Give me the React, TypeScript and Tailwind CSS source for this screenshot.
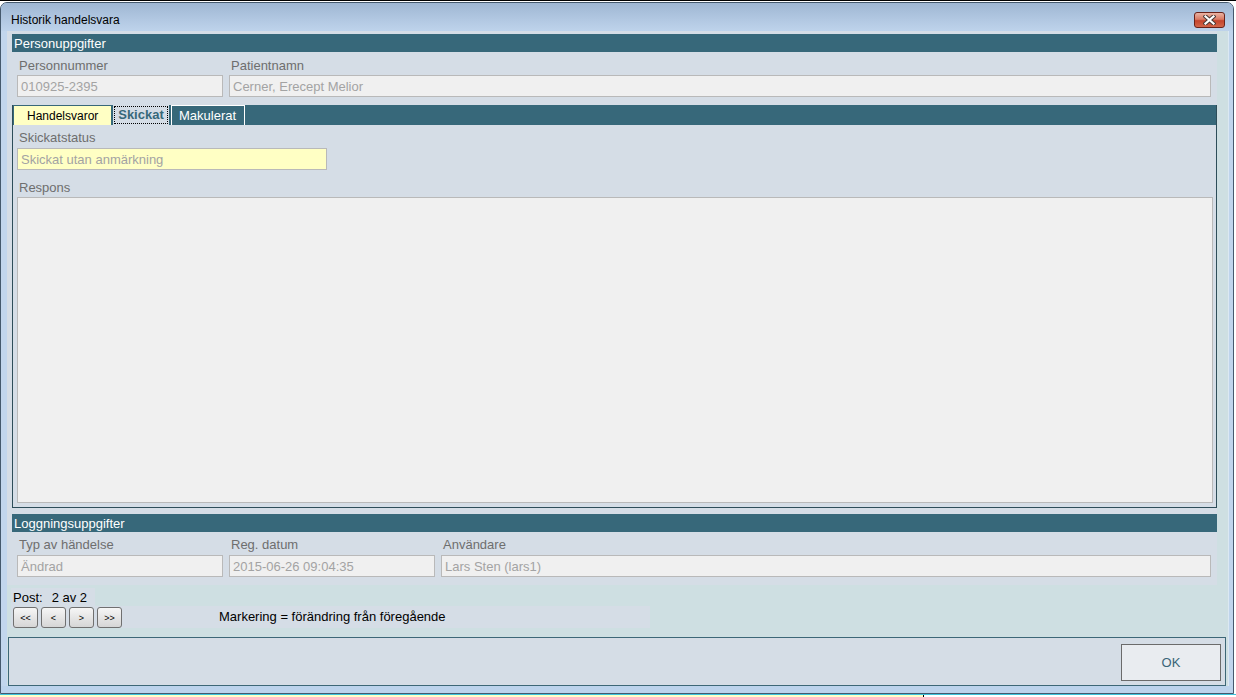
import React from "react";

const font = "font-['Liberation_Sans',Arial,sans-serif]";

const Label: React.FC<{ text: string }> = ({ text }) => (
  <div className="h-[16px] pl-[2px] text-[13px] leading-[16px] text-[#6e6e6e] whitespace-nowrap">
    {text}
  </div>
);

const Field: React.FC<{ value: string; className?: string; yellow?: boolean }> = ({
  value,
  className = "",
  yellow,
}) => (
  <div
    className={`h-[22px] border border-[#b9b9b9] pl-[3px] text-[13px] leading-[21px] text-[#a3a3a3] whitespace-nowrap overflow-hidden ${
      yellow ? "bg-[#ffffc4]" : "bg-[#f0f0f0]"
    } ${className}`}
  >
    {value}
  </div>
);

const SectionHeader: React.FC<{ title: string }> = ({ title }) => (
  <div className="h-[18px] bg-[#37687a] pl-[2px] text-[13px] leading-[19px] text-white">
    {title}
  </div>
);

const NavButton: React.FC<{ label: string }> = ({ label }) => (
  <button
    type="button"
    className="w-[25px] h-[21px] rounded-[3px] border border-[#707070] bg-[linear-gradient(180deg,#f6f6f6_0%,#e4e4e4_55%,#d6d6d6_100%)] text-[9px] leading-[18px] text-black flex items-center justify-center"
  >
    {label}
  </button>
);

const App: React.FC = () => {
  return (
    <div className={`w-[1236px] h-[697px] overflow-hidden bg-white ${font}`}>
      {/* strip of whatever lies behind the window */}
      <div className="h-[2px] border-t border-black bg-white" />

      {/* window */}
      <div className="w-[1234px] h-[692px] rounded-t-[7px] border border-[#45596d] bg-[#bfd4ec] flex flex-col overflow-hidden">
        {/* title bar */}
        <div className="h-[28px] shrink-0 flex items-start justify-between bg-[linear-gradient(180deg,#9fb7d3_0%,#b2c8e2_60%,#bed3eb_100%)]">
          <div className="pl-[10px] pt-[10px] text-[12px] leading-[14px] text-black">
            Historik handelsvara
          </div>
          <div className="mt-[9px] mr-[8px] w-[31px] h-[16px] rounded-[3px] border border-[#6a2219] bg-[linear-gradient(180deg,#eab3a3_0%,#d97a64_45%,#c4442c_55%,#d2664a_100%)] flex items-center justify-center">
            <svg width="13" height="10" viewBox="0 0 13 10">
              <path d="M2.5 1.5 L10.5 8.5 M10.5 1.5 L2.5 8.5" stroke="#4a3a36" strokeWidth="4.2" strokeLinecap="square" />
              <path d="M2.5 1.5 L10.5 8.5 M10.5 1.5 L2.5 8.5" stroke="#ffffff" strokeWidth="2.2" strokeLinecap="square" />
            </svg>
          </div>
        </div>

        {/* body row: left frame, client, right frame */}
        <div className="flex h-[655px] shrink-0">
          <div className="w-[6px] bg-[#c2d6ed]" />

          {/* client */}
          <div className="w-[1221px] bg-[#cedfe2] flex flex-col">
            {/* form panel */}
            <div className="w-[1210px] h-[554px] bg-[#d5dde6] pl-[5px] pt-[3px] flex flex-col">
              <SectionHeader title="Personuppgifter" />
              <div className="mt-[6px] ml-[5px] flex gap-[6px]">
                <div className="w-[206px]">
                  <Label text="Personnummer" />
                  <Field value="010925-2395" className="mt-[1px]" />
                </div>
                <div className="w-[982px]">
                  <Label text="Patientnamn" />
                  <Field value="Cerner, Erecept Melior" className="mt-[1px]" />
                </div>
              </div>

              {/* tab panel */}
              <div className="mt-[8px] w-[1205px] h-[403px] border-x border-b border-[#2d4d59] flex flex-col">
                <div className="h-[20px] bg-[#37687a] flex items-end pl-[1px] gap-[2px]">
                  <div className="h-[19px] w-[97px] bg-[#ffffc4] pl-[13px] text-[12px] leading-[20px] text-black">
                    Handelsvaror
                  </div>
                  <div className="h-[20px] w-[56px] bg-[#d5dde6] p-[1px]">
                    <div className="h-full border border-dotted border-black flex items-center justify-center text-[13px] font-bold text-[#37687a] leading-[16px]">
                      Skickat
                    </div>
                  </div>
                  <div className="h-[20px] w-[74px] border-x border-t border-white bg-[#37687a] pl-[7px] text-[13px] leading-[19px] text-white">
                    Makulerat
                  </div>
                </div>
                <div className="flex-1 pl-[4px] pr-[3px] pt-[5px] pb-[4px] flex flex-col">
                  <Label text="Skickatstatus" />
                  <Field value="Skickat utan anmärkning" yellow className="mt-[2px] w-[310px]" />
                  <div className="mt-[10px]">
                    <Label text="Respons" />
                  </div>
                  <div className="mt-[1px] flex-1 border border-[#b9b9b9] bg-[#f0f0f0]" />
                </div>
              </div>

              <div className="mt-[6px]">
                <SectionHeader title="Loggningsuppgifter" />
              </div>
              <div className="mt-[5px] ml-[5px] flex gap-[6px]">
                <div className="w-[206px]">
                  <Label text="Typ av händelse" />
                  <Field value="Ändrad" className="mt-[2px]" />
                </div>
                <div className="w-[206px]">
                  <Label text="Reg. datum" />
                  <Field value="2015-06-26 09:04:35" className="mt-[2px]" />
                </div>
                <div className="w-[770px]">
                  <Label text="Användare" />
                  <Field value="Lars Sten (lars1)" className="mt-[2px]" />
                </div>
              </div>
            </div>

            {/* record navigation */}
            <div className="h-[52px] pt-[3px] flex flex-col">
              <div className="ml-[4px] w-[84px] h-[18px] bg-[#d5dde6] pl-[2px] flex gap-[9px] text-[13px] leading-[19px] text-black">
                <span>Post:</span>
                <span>2 av 2</span>
              </div>
              <div className="ml-[4px] w-[639px] h-[22px] bg-[#d5dde6] pl-[2px] pt-[1px] flex items-start">
                <div className="flex gap-[3px]">
                  <NavButton label="<<" />
                  <NavButton label="<" />
                  <NavButton label=">" />
                  <NavButton label=">>" />
                </div>
                <div className="ml-[97px] -mt-[1px] text-[13px] leading-[22px] text-black whitespace-nowrap">
                  Markering = förändring från föregående
                </div>
              </div>
            </div>

            {/* button panel */}
            <div className="ml-[1px] w-[1218px] h-[49px] border border-[#3d6777] bg-[#d5dde6] flex justify-end items-start">
              <button
                type="button"
                className="mt-[6px] mr-[4px] w-[100px] h-[37px] border border-[#6b6b6b] bg-[#e9ecf0] text-[13px] text-[#3a6578]"
              >
                OK
              </button>
            </div>
          </div>

          <div className="w-[5px] bg-[#bfd4ec] border-l border-[#dbe8f3]" />
        </div>

        {/* bottom frame */}
        <div className="flex-1 bg-[#bcd3ec]" />
      </div>

      {/* what lies below the window */}
      <div className="h-[1px] bg-[#3cc4dd]" />
      <div className="h-[2px] flex">
        <div className="w-[923px] bg-[#ffffc8]" />
        <div className="w-[1px] bg-black" />
        <div className="flex-1 bg-white" />
      </div>
    </div>
  );
};

export default App;
